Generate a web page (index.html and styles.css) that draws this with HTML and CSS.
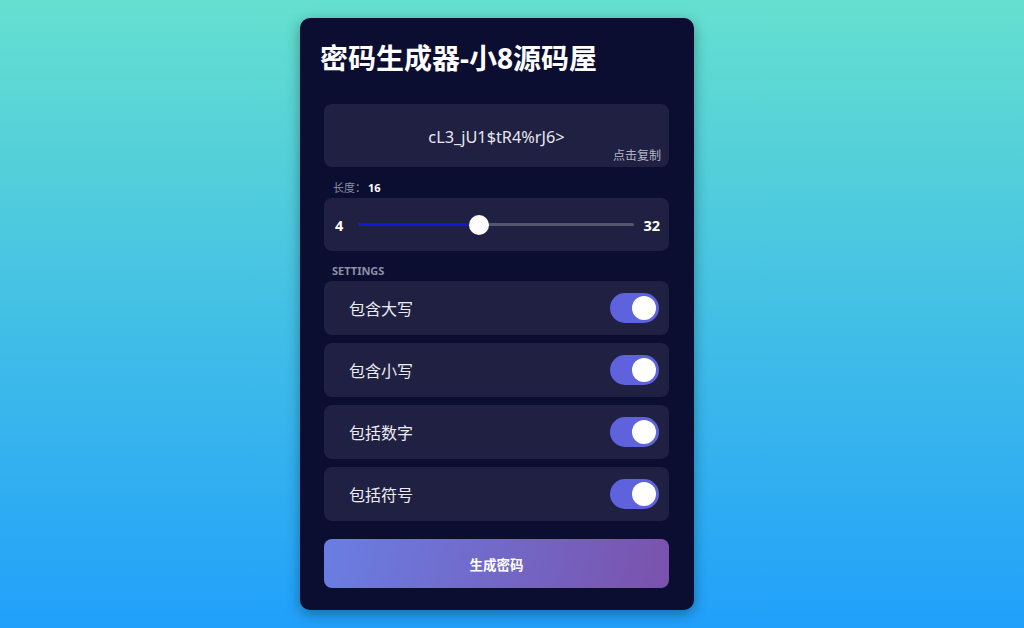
FILE: index.html
```html
<!DOCTYPE html>
<html lang="zh">
<head>
<meta charset="utf-8">
<title>密码生成器</title>
<link rel="stylesheet" href="styles.css">
</head>
<body>
<div class="page">
  <div class="card">
    <h1 class="title">密码生成器-小8源码屋</h1>
    <div class="result">
      <div class="pw">cL3_jU1$tR4%rJ6&gt;</div>
      <div class="copy">点击复制</div>
    </div>
    <div class="label">长度：<b>16</b></div>
    <div class="slider-box">
      <span class="num">4</span>
      <div class="track">
        <div class="fill" style="width:43.5%"></div>
        <div class="thumb" style="left:43.5%"></div>
      </div>
      <span class="num">32</span>
    </div>
    <div class="label caps">SETTINGS</div>
    <div class="settings">
      <div class="row"><span>包含大写</span><span class="toggle"><span class="knob"></span></span></div>
      <div class="row"><span>包含小写</span><span class="toggle"><span class="knob"></span></span></div>
      <div class="row"><span>包括数字</span><span class="toggle"><span class="knob"></span></span></div>
      <div class="row"><span>包括符号</span><span class="toggle"><span class="knob"></span></span></div>
    </div>
    <button class="btn">生成密码</button>
  </div>
</div>
</body>
</html>
```

FILE: styles.css
```css
* { box-sizing: border-box; }
html, body { margin: 0; height: 100%; }
body {
  background: linear-gradient(to bottom, #65e0cf 0%, #21a0fb 100%);
  font-family: "Noto Sans", "Noto Sans CJK SC", sans-serif;
  color: #fff;
  overflow: hidden;
}
.page {
  display: flex;
  justify-content: center;
  padding: 18px 30px 0 0;
}
.card {
  width: 394px;
  height: 592px;
  background: #0b0e31;
  border-radius: 10px;
  padding: 20px 25px 22px 24px;
  box-shadow: 0 4px 14px rgba(0,0,0,0.35);
  display: flex;
  flex-direction: column;
}
.title {
  margin: 0 0 26px -4px;
  font-size: 28px;
  line-height: 40px;
  font-weight: 700;
}
.result {
  position: relative;
  height: 63px;
  background: #1f2042;
  border-radius: 8px;
  padding-top: 22px;
  text-align: center;
}
.pw {
  font-size: 16.3px;
  line-height: 22px;
  color: #e6e6ee;
}
.copy {
  position: absolute;
  right: 8px;
  bottom: 3px;
  font-size: 12px;
  line-height: 16px;
  color: #b4b5c4;
}
.label {
  margin: 14px 0 3px 9px;
  font-size: 11px;
  line-height: 14px;
  color: #8d8fa6;
}
.label b { color: #fff; font-weight: 700; margin-left: 2px; }
.caps {
  margin: 13px 0 3px 8px;
  font-weight: 700;
}
.slider-box {
  height: 53px;
  background: #1f2042;
  border-radius: 8px;
  display: flex;
  align-items: center;
  padding: 0 9px 0 11px;
}
.num {
  font-size: 14.5px;
  font-weight: 700;
}
.track {
  position: relative;
  flex: 1;
  height: 3px;
  margin: 0 9px 0 16px;
  background: #55576f;
  border-radius: 2px;
}
.fill {
  height: 100%;
  background: #1414dc;
  border-radius: 2px;
}
.thumb {
  position: absolute;
  top: 50%;
  width: 20px;
  height: 20px;
  margin: -10px 0 0 -10px;
  border-radius: 50%;
  background: #fff;
}
.settings {
  display: flex;
  flex-direction: column;
  gap: 8px;
}
.row {
  height: 54px;
  background: #1f2042;
  border-radius: 8px;
  display: flex;
  align-items: center;
  justify-content: space-between;
  padding: 0 10px 0 25px;
  font-size: 16px;
  color: #ececf3;
}
.toggle {
  position: relative;
  width: 49px;
  height: 30px;
  border-radius: 15px;
  background: #5e62dc;
}
.knob {
  position: absolute;
  right: 3px;
  top: 3px;
  width: 24px;
  height: 24px;
  border-radius: 50%;
  background: #fff;
}
.btn {
  margin-top: 18px;
  height: 49px;
  border: 0;
  border-radius: 8px;
  background: linear-gradient(105deg, #6a7ee3 0%, #7a52ac 100%);
  color: #fff;
  font-family: "Noto Sans", "Noto Sans CJK SC", sans-serif;
  font-size: 13.5px;
  font-weight: 700;
}
```
